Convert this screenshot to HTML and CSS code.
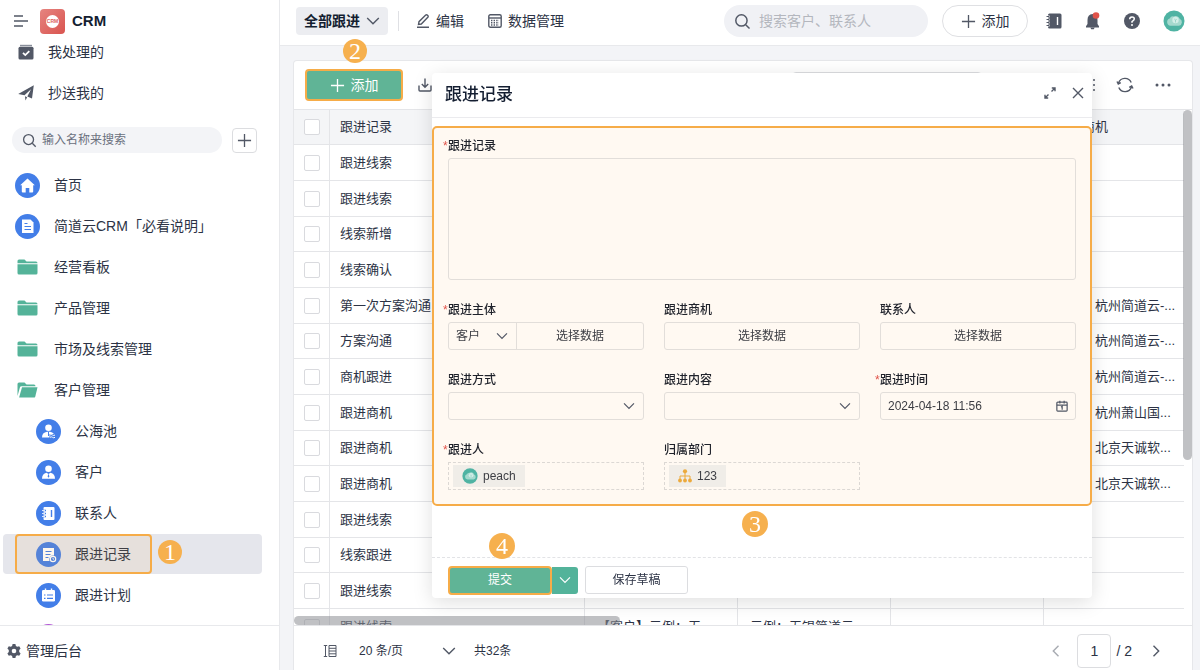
FILE: index.html
```html
<!DOCTYPE html>
<html lang="zh-CN">
<head>
  <meta charset="UTF-8">
  <meta name="viewport" content="width=device-width, initial-scale=1.0">
  <title>CRM - 跟进记录</title>
  <link rel="stylesheet" href="styles.css">
</head>
<body>

  <!-- Shared icons -->
  <svg class="sprite" aria-hidden="true">
    <symbol id="i-search" viewBox="0 0 16 16"><circle cx="7" cy="7" r="5.3"/><path d="M11 11l3.6 3.6"/></symbol>
    <symbol id="i-plus" viewBox="0 0 16 16"><path d="M8 1v14M1 8h14"/></symbol>
    <symbol id="i-down" viewBox="0 0 14 14"><path d="M1.2 4L7 9.800l5.800-5.800"/></symbol>
    <symbol id="i-left" viewBox="0 0 14 14"><path d="M9.5 1.8L4.3 7l5.2 5.2"/></symbol>
    <symbol id="i-right" viewBox="0 0 14 14"><path d="M4.5 1.8L9.7 7l-5.2 5.2"/></symbol>
    <symbol id="i-folder" viewBox="0 0 20 16"><path d="M0 4.2V2Q0 .5 1.5.5H7l2 2h9.5Q20 2.500 20 4.200z"/><path d="M0 5.200h20V14q0 1.600-1.500 1.600h-17Q0 15.600 0 14z"/></symbol>
    <symbol id="i-folder-open" viewBox="0 0 20 16"><path d="M0 14V2Q0 .5 1.500.5H7l2 2h7.500Q18 2.500 18 4.200H4Q2.800 4.200 2.400 5.400z"/><path d="M4.500 5.200H20l-2.200 9.200q-.4 1.200-1.500 1.200H1.600z"/></symbol>
    <symbol id="i-cloud" viewBox="0 0 22 22">
      <circle cx="11" cy="11" r="10.500" fill="#4fb3a3"/>
      <path d="M7.500 15.800a3.700 3.700 0 0 1-.8-7.200 3.600 3.600 0 0 1 3.700-2.200 4.600 4.600 0 0 1 6.300 2.400 3.700 3.700 0 0 1-.7 7z" fill="#a5d9ce"/>
      <circle cx="12.500" cy="10" r="3.200" fill="#d3eee8"/>
      <path d="M11.300 9l1.200 1.200L13.700 9M12.500 10v2.500" fill="none" stroke="#8fcfc2" stroke-width=".8"/>
    </symbol>
    <symbol id="i-cal" viewBox="0 0 14 14"><rect x="1" y="2.500" width="12" height="10.500" rx="1"/><path d="M1 6h12M4.500 1v3M9.500 1v3M5.800 8.200l1.400-.6V11.500"/></symbol>
  </svg>

  <aside class="sidebar">
    <div class="brand">
      <svg class="line" width="16" height="16" viewBox="0 0 16 16"><path d="M1 3h9M1 8h14M1 13h9"/></svg>
      <span class="logo"><i>CRM</i></span>
      <strong>CRM</strong>
    </div>

    <ul class="todo">
      <li><a href="#">
        <svg width="16" height="16" viewBox="0 0 16 16"><path d="M2 .8h12v1.400H2z" fill="#8a8f9b"/><rect x=".5" y="2.800" width="15" height="12.700" rx="1.500" fill="#525866"/><path d="M5 8.800l2.300 2.300 4-4" fill="none" stroke="#fff" stroke-width="1.800"/></svg>
        我处理的</a></li>
      <li><a href="#">
        <svg width="16" height="16" viewBox="0 0 16 16" fill="#525866"><path d="M15.800.3L14 13.600l-4.700-2L13 4.300l-6.500 6L.2 8.900z"/><path d="M7 11.300l2.200 1-1.800 3.300z"/></svg>
        抄送我的</a></li>
    </ul>

    <div class="find">
      <div class="find-box">
        <svg class="line" width="15" height="15"><use href="#i-search"/></svg>
        <input type="text" placeholder="输入名称来搜索" aria-label="输入名称来搜索">
      </div>
      <button class="find-add" aria-label="新建"><svg class="line" width="15" height="15"><use href="#i-plus"/></svg></button>
    </div>

    <nav class="menu">
      <a href="#"><svg width="25" height="25" viewBox="0 0 25 25"><circle cx="12.500" cy="12.500" r="12.500" fill="#437ee8"/><path d="M12.500 5.500l7.300 6.700h-1.600v6.300q0 1-1 1h-2.900v-4.500h-3.600v4.500H7.800q-1 0-1-1v-6.300H5.200z" fill="#fff"/></svg>首页</a>
      <a href="#"><svg width="25" height="25" viewBox="0 0 25 25"><circle cx="12.500" cy="12.500" r="12.500" fill="#437ee8"/><path d="M7 5.500h8.500l3 3v10.500H7z" fill="#fff"/><path d="M9.500 9.500h3M9.500 12.500h6.500M9.500 15.500h6.500" stroke="#437ee8"/></svg>简道云CRM「必看说明」</a>
      <a href="#"><svg class="folder" width="25" height="16"><use href="#i-folder"/></svg>经营看板</a>
      <a href="#"><svg class="folder" width="25" height="16"><use href="#i-folder"/></svg>产品管理</a>
      <a href="#"><svg class="folder" width="25" height="16"><use href="#i-folder"/></svg>市场及线索管理</a>
      <a href="#"><svg class="folder" width="25" height="16"><use href="#i-folder-open"/></svg>客户管理</a>
      <a href="#" class="sub"><svg width="25" height="25" viewBox="0 0 25 25"><circle cx="12.500" cy="12.500" r="12.500" fill="#437ee8"/><circle cx="12.500" cy="8.800" r="3.300" fill="#fff"/><path d="M6 18.500q0-5 5-5.800h3q2.500.4 4 2.300h-4.500v3.500z" fill="#fff"/><path d="M12.500 13v4" stroke="#437ee8"/><path d="M14 16q1.200-1 2.500 0t2.500 0M14 18.300q1.200-1 2.500 0t2.500 0" fill="none" stroke="#fff"/></svg>公海池</a>
      <a href="#" class="sub"><svg width="25" height="25" viewBox="0 0 25 25"><circle cx="12.500" cy="12.500" r="12.500" fill="#437ee8"/><circle cx="12.500" cy="8.800" r="3.300" fill="#fff"/><path d="M6 18.700q0-5.200 4.500-6l2 1.300 2-1.300q4.500.8 4.500 6z" fill="#fff"/><path d="M12.500 13.500l.9 3-.9 1.200-.9-1.200z" fill="#437ee8"/></svg>客户</a>
      <a href="#" class="sub"><svg width="25" height="25" viewBox="0 0 25 25"><circle cx="12.500" cy="12.500" r="12.500" fill="#437ee8"/><rect x="7.500" y="6" width="11" height="13" rx="1" fill="#fff"/><path d="M15.500 9v7" stroke="#437ee8" stroke-width="1.400"/><path d="M6 9.500h4M6 12.500h4M6 15.500h4" stroke="#437ee8" stroke-width="1.600"/><path d="M6 9.500h3M6 12.500h3M6 15.500h3" stroke="#fff" stroke-width=".8"/></svg>联系人</a>
      <a href="#" class="sub active"><svg width="25" height="25" viewBox="0 0 25 25"><circle cx="12.500" cy="12.500" r="12.500" fill="#437ee8"/><path d="M7 6h11v7.500a4 4 0 0 0-4.500 5.500H7z" fill="#fff"/><path d="M9.500 9.500h6M9.500 12.500h5M9.500 15.500h3" stroke="#437ee8"/><circle cx="17" cy="17" r="2.700" fill="none" stroke="#fff" stroke-width="1.200"/><path d="M17 15.800v1.400h1" fill="none" stroke="#fff" stroke-width=".8"/></svg>跟进记录
        <span class="mark"></span><span class="step step-1">1</span></a>
      <a href="#" class="sub"><svg width="25" height="25" viewBox="0 0 25 25"><circle cx="12.500" cy="12.500" r="12.500" fill="#437ee8"/><rect x="6" y="7" width="13" height="11.500" rx="1.200" fill="#fff"/><path d="M9.500 5.500v3M15.500 5.500v3" stroke="#fff" stroke-width="1.400"/><path d="M8 12h1.500M11 12h6M8 15.300h1.500M11 15.300h6" stroke="#437ee8" stroke-width="1.200"/></svg>跟进计划</a>
      <a href="#" class="sub" aria-label="更多"><svg width="25" height="25" viewBox="0 0 25 25"><circle cx="12.500" cy="12.500" r="12.500" fill="#b357d6"/></svg></a>
    </nav>

    <a href="#" class="admin">
      <svg width="14" height="14" viewBox="0 0 14 14"><path d="M5.600 0h2.800l.5 2 1.300.8 2-.6 1.400 2.400L12.200 6v2l1.400 1.400-1.400 2.400-2-.6-1.300.8-.5 2H5.600l-.5-2-1.300-.8-2 .6L.4 9.400 1.800 8V6L.4 4.600l1.400-2.400 2 .6L5.100 2z" fill="#525866"/><circle cx="7" cy="7" r="2.300" fill="#fff"/></svg>
      管理后台
    </a>
  </aside>

  <main class="main">
    <header class="topbar">
      <button class="view">全部跟进 <svg class="line" width="14" height="14"><use href="#i-down"/></svg></button>
      <span class="divider"></span>
      <button class="link"><svg class="line" width="14" height="14" viewBox="0 0 14 14"><path d="M1 13.200h12M2.500 10.500l.5-2.800L9.700 1q.8-.6 1.600.1l.6.6q.6.800-.1 1.600L5.300 10z"/></svg>编辑</button>
      <button class="link"><svg class="line" width="14" height="14" viewBox="0 0 14 14"><rect x=".8" y=".8" width="12.400" height="12.400" rx="1.500"/><path d="M1 4h12"/><path d="M3 6.500h8M3 8.800h8M3 11h8" stroke-dasharray="1.400 1.200"/></svg>数据管理</button>
      <div class="search">
        <svg class="line" width="17" height="17"><use href="#i-search"/></svg>
        <input type="text" placeholder="搜索客户、联系人" aria-label="搜索客户、联系人">
      </div>
      <button class="add"><svg class="line" width="15" height="15"><use href="#i-plus"/></svg>添加</button>
      <div class="tools">
        <svg width="16" height="16" viewBox="0 0 16 16"><rect x="2" y=".5" width="13.500" height="15" rx="1.500" fill="#525866"/><path d="M11.500 4v8" stroke="#fff" stroke-width="1.400"/><path d="M.5 3.500h3M.5 6.500h3M.5 9.500h3M.5 12.500h3" stroke="#fff" stroke-width="1.800"/><path d="M.5 3.500h2.500M.5 6.500h2.500M.5 9.500h2.500M.5 12.500h2.500" stroke="#525866"/></svg>
        <svg width="16" height="18" viewBox="0 0 16 18"><path d="M7.500 2q5 .5 5 6v4l1.500 2.200v1.300H1v-1.300L2.500 12V8Q2.500 2.500 7.500 2z" fill="#525866"/><path d="M5.300 15.500h4.400l-.9 1.700H6.200z" fill="#525866"/><circle cx="11" cy="3.500" r="3.300" fill="#e0534a"/></svg>
        <svg width="16" height="16" viewBox="0 0 16 16"><circle cx="8" cy="8" r="8" fill="#525866"/><path d="M5.700 6.300Q5.700 4 8 4t2.300 2.100Q10.300 7.300 8 8.600v1.200" fill="none" stroke="#fff" stroke-width="1.500"/><circle cx="8" cy="11.900" r="1" fill="#fff"/></svg>
        <svg width="22" height="22"><use href="#i-cloud"/></svg>
      </div>
    </header>

    <section class="card">
      <div class="toolbar">
        <button class="create"><svg class="line" width="15" height="15"><use href="#i-plus"/></svg>添加</button>
        <span class="step step-2">2</span>
        <svg class="line" width="14" height="14" viewBox="0 0 14 14"><path d="M7 .5v8.500M3.800 6L7 9.200 10.200 6M1 7.500V12q0 1 1 1h10q1 0 1-1V7.500"/></svg>
        <input class="filter" type="text" aria-label="搜索数据">
        <div class="tools">
          <svg class="line" width="16" height="14" viewBox="0 0 16 14"><path d="M0 2h16M0 7h16M0 12h16" stroke-dasharray="12 2 2"/></svg>
          <svg class="line" width="18" height="18" viewBox="0 0 18 18"><path d="M2.500 7A6.800 6.800 0 0 1 15.200 6.500M15.500 11A6.800 6.800 0 0 1 2.800 11.500M1 5.500L2.300 8l2.500-1.300M17 12.500L15.700 10l-2.500 1.300"/></svg>
          <svg width="16" height="16" viewBox="0 0 16 16" fill="#525866"><circle cx="2" cy="8" r="1.500"/><circle cx="8" cy="8" r="1.500"/><circle cx="14" cy="8" r="1.500"/></svg>
        </div>
      </div>

      <div class="grid">
        <table>
          <colgroup><col class="c-check"><col class="c-name"><col class="c-data"><col class="c-data"><col class="c-data"><col></colgroup>
          <thead>
            <tr><th><input type="checkbox" aria-label="全选"></th><th>跟进记录</th><th>跟进主体</th><th>客户</th><th>联系人</th><th>跟进商机</th></tr>
          </thead>
          <tbody id="rows"></tbody>
        </table>
        <span class="thumb thumb-y"></span>
        <span class="thumb thumb-x"></span>
      </div>

      <footer class="pager">
        <svg class="line rows-icon" width="14" height="14" viewBox="0 0 14 14"><path d="M2.500 1.500v11M.8 1.500h3.400M.8 12.500h3.400M6 1.500h7v11H6zM6 4.300h7M6 7h7M6 9.800h7"/></svg>
        <button class="size">20 条/页 <svg class="line" width="14" height="14"><use href="#i-down"/></svg></button>
        <span>共32条</span>
        <div class="pages">
          <button class="prev" aria-label="上一页"><svg class="line" width="14" height="14"><use href="#i-left"/></svg></button>
          <input type="text" value="1" aria-label="页码">
          <span>/ 2</span>
          <button class="next" aria-label="下一页"><svg class="line" width="14" height="14"><use href="#i-right"/></svg></button>
        </div>
      </footer>
    </section>
  </main>

  <div class="dialog" role="dialog" aria-labelledby="dialogTitle">
    <header class="dialog-head">
      <h2 id="dialogTitle">跟进记录</h2>
      <button aria-label="全屏"><svg class="line" width="12" height="12" viewBox="0 0 12 12"><path d="M7.500 4.500L11 1M7.800 1H11v3.200M4.500 7.500L1 11M4.200 11H1V7.800"/></svg></button>
      <button aria-label="关闭"><svg class="line" width="12" height="12" viewBox="0 0 12 12"><path d="M1 1l10 10M11 1L1 11"/></svg></button>
    </header>

    <form class="fields">
      <div class="field wide">
        <label class="required" for="record">跟进记录</label>
        <textarea id="record"></textarea>
      </div>
      <div class="field">
        <label class="required" for="subject">跟进主体</label>
        <div class="split">
          <div class="select">
            <select id="subject"><option>客户</option><option>线索</option></select>
            <svg class="line" width="12" height="12"><use href="#i-down"/></svg>
          </div>
          <button type="button">选择数据</button>
        </div>
      </div>
      <div class="field">
        <label for="deal">跟进商机</label>
        <button type="button" class="box" id="deal">选择数据</button>
      </div>
      <div class="field">
        <label for="contact">联系人</label>
        <button type="button" class="box" id="contact">选择数据</button>
      </div>
      <div class="field">
        <label for="way">跟进方式</label>
        <div class="select box">
          <select id="way"><option></option></select>
          <svg class="line" width="12" height="12"><use href="#i-down"/></svg>
        </div>
      </div>
      <div class="field">
        <label for="content">跟进内容</label>
        <div class="select box">
          <select id="content"><option></option></select>
          <svg class="line" width="12" height="12"><use href="#i-down"/></svg>
        </div>
      </div>
      <div class="field">
        <label class="required" for="time">跟进时间</label>
        <div class="date box">
          <input id="time" type="text" value="2024-04-18 11:56">
          <svg class="line" width="12" height="12"><use href="#i-cal"/></svg>
        </div>
      </div>
      <div class="field">
        <span class="required label">跟进人</span>
        <div class="picked"><span class="tag"><svg width="16" height="16" viewBox="0 0 22 22"><use href="#i-cloud"/></svg>peach</span></div>
      </div>
      <div class="field">
        <span class="label">归属部门</span>
        <div class="picked"><span class="tag"><svg width="14" height="14" viewBox="0 0 14 14" fill="#ecaa3d"><circle cx="7" cy="2.300" r="2.100"/><circle cx="2" cy="11.500" r="1.900"/><circle cx="7" cy="11.500" r="1.900"/><circle cx="12" cy="11.500" r="1.900"/><path d="M7 3v8M2 11V7h10v4" fill="none" stroke="#ecaa3d"/></svg>123</span></div>
      </div>
    </form>
    <span class="step step-3">3</span>

    <footer class="dialog-foot">
      <button class="submit">提交</button>
      <button class="more" aria-label="更多"><svg class="line" width="12" height="12"><use href="#i-down"/></svg></button>
      <button class="draft">保存草稿</button>
      <span class="step step-4">4</span>
    </footer>
  </div>

  <script>
    // name, linked subject, customer, contact, deal
    const records = [
      ["跟进线索", "", "", "", ""],
      ["跟进线索", "", "", "", ""],
      ["线索新增", "", "", "", ""],
      ["线索确认", "", "", "", ""],
      ["第一次方案沟通", "", "", "", "示例：杭州简道云-..."],
      ["方案沟通", "", "", "", "示例：杭州简道云-..."],
      ["商机跟进", "", "", "", "示例：杭州简道云-..."],
      ["跟进商机", "", "", "", "示例：杭州萧山国..."],
      ["跟进商机", "", "", "", "示例：北京天诚软..."],
      ["跟进商机", "", "", "", "示例：北京天诚软..."],
      ["跟进线索", "", "", "", ""],
      ["线索跟进", "", "", "", ""],
      ["跟进线索", "", "", "", ""],
      ["跟进线索", "【客户】示例：无...", "示例：无锡简道云", "", ""]
    ];

    const body = document.getElementById("rows");
    records.forEach((record) => {
      const row = body.insertRow();
      const check = document.createElement("input");
      check.type = "checkbox";
      check.setAttribute("aria-label", "选择");
      row.insertCell().appendChild(check);
      record.forEach((text) => {
        row.insertCell().textContent = text;
      });
    });
  </script>

</body>
</html>
```
FILE: styles.css
```css
* {
  box-sizing: border-box;
}

body {
  margin: 0;
  height: 100vh;
  display: grid;
  grid-template-columns: 280px 1fr;
  overflow: hidden;
  font-family: "Liberation Sans", "Noto Sans CJK SC", sans-serif;
  font-size: 14px;
  line-height: 20px;
  color: #2c3345;
  background: #f3f4f7;
}

button, input, select, textarea {
  font: inherit;
  color: inherit;
  margin: 0;
  padding: 0;
  border: none;
  background: none;
  outline: none;
  min-width: 0;
}

button {
  display: flex;
  align-items: center;
  justify-content: center;
}

a {
  color: inherit;
  text-decoration: none;
}

svg {
  flex: none;
  display: block;
}

.sprite {
  position: absolute;
  width: 0;
  height: 0;
}

.line {
  fill: none;
  stroke: #525866;
  stroke-width: 1.4;
}

/* numbered steps */
.step {
  position: absolute;
  width: 24px;
  height: 24px;
  border-radius: 50%;
  background: #f6b04e;
  color: #fff;
  font-family: "Liberation Serif", serif;
  font-size: 24px;
  line-height: 24px;
  text-align: center;
}

/* sidebar */
.sidebar {
  display: flex;
  flex-direction: column;
  min-height: 0;
  background: #fff;
  border-right: 1px solid #e8e9ec;
}

.brand {
  flex: none;
  height: 40px;
  padding: 2px 13px 0;
  display: flex;
  align-items: center;
  font-size: 15px;
  color: #141e31;
}

.brand .line {
  stroke-width: 1.6;
}

.logo {
  width: 25px;
  height: 25px;
  margin: 0 7px 0 11px;
  border-radius: 4px;
  background: linear-gradient(135deg, #e68480, #d9544f);
  display: grid;
  place-items: center;
}

.logo i {
  width: 13px;
  height: 13px;
  border-radius: 50%;
  background: #fff;
  color: #dd625d;
  font: bold 5px/13px "Liberation Sans", sans-serif;
  text-align: center;
}

.todo {
  flex: none;
  list-style: none;
  margin: 0;
  padding: 0 18px;
  display: grid;
  gap: 17px;
}

.todo a {
  height: 24px;
  display: flex;
  align-items: center;
  gap: 14px;
}

.find {
  flex: none;
  display: flex;
  align-items: center;
  gap: 10px;
  margin: 22px 22px 12px 12px;
}

.find-box {
  flex: 1;
  height: 26px;
  padding: 0 10px;
  border-radius: 13px;
  background: #f3f4f7;
  display: flex;
  align-items: center;
  gap: 5px;
}

.find-box input {
  flex: 1;
  font-size: 12px;
}

.find-box input::placeholder {
  color: #6a707d;
}

.find-add {
  width: 25px;
  height: 25px;
  border: 1px solid #dcdde0;
  border-radius: 4px;
}

.menu {
  flex: 1;
  min-height: 0;
  overflow: hidden;
  display: flex;
  flex-direction: column;
  gap: 1px;
  padding: 0 17px 0 3px;
}

.menu a {
  position: relative;
  flex: none;
  height: 40px;
  padding-left: 12px;
  border-radius: 4px;
  display: flex;
  align-items: center;
  gap: 14px;
}

.menu .sub {
  padding-left: 33px;
}

.menu .active {
  background: #e5e6ec;
}

.folder {
  fill: #54b399;
}

.mark {
  position: absolute;
  top: 0;
  bottom: 0;
  left: 12px;
  width: 137px;
  border: 2px solid #f6ac48;
  border-radius: 4px;
  background: rgba(246, 176, 78, 0.1);
}

.step-1 {
  left: 155px;
  top: 6px;
}

.admin {
  flex: none;
  height: 45px;
  padding: 5px 7px 0;
  border-top: 1px solid #e8e9ec;
  display: flex;
  align-items: center;
  gap: 5px;
}

/* top bar */
.main {
  display: flex;
  flex-direction: column;
  min-width: 0;
  min-height: 0;
}

.topbar {
  flex: none;
  height: 46px;
  padding: 0 15px 3px 16px;
  border-bottom: 1px solid #e8e9ec;
  background: #fff;
  display: flex;
  align-items: center;
}

.view {
  height: 28px;
  padding: 0 8px;
  gap: 6px;
  border-radius: 4px;
  background: #ecedf1;
  font-weight: bold;
  color: #141e31;
}

.divider {
  width: 1px;
  height: 20px;
  margin: 0 17px 0 10px;
  background: #dfe0e4;
}

.link {
  gap: 6px;
  margin-right: 24px;
}

.search {
  width: 204px;
  height: 32px;
  margin-left: auto;
  padding: 0 10px;
  border-radius: 16px;
  background: #f0f1f5;
  display: flex;
  align-items: center;
  gap: 8px;
}

.search input {
  flex: 1;
}

.search input::placeholder {
  color: #b4b7be;
}

.add {
  width: 86px;
  height: 32px;
  margin: 0 18px 0 14px;
  gap: 6px;
  border: 1px solid #dfe0e3;
  border-radius: 16px;
}

.tools {
  display: flex;
  align-items: center;
  gap: 23px;
}

/* data card */
.card {
  flex: 1;
  min-height: 0;
  margin: 14px 7px 0 13px;
  border: 1px solid #e6e7ea;
  border-bottom: none;
  border-radius: 4px 4px 0 0;
  background: #fff;
  display: flex;
  flex-direction: column;
}

.toolbar {
  position: relative;
  flex: none;
  height: 49px;
  padding: 0 21px 0 11px;
  border-bottom: 1px solid #e4e5e8;
  display: flex;
  align-items: center;
  gap: 15px;
}

.toolbar .tools {
  gap: 21px;
}

.create {
  width: 98px;
  height: 32px;
  gap: 6px;
  border: 2px solid #f6ac48;
  border-radius: 4px;
  background: #60b496;
  color: #fff;
}

.create .line,
.more .line {
  stroke: #fff;
}

.step-2 {
  left: 49px;
  top: -22px;
}

.filter {
  width: 190px;
  height: 26px;
  margin: 0 82px 0 auto;
  border: 1px solid #dcdde0;
  border-radius: 4px;
}

.grid {
  position: relative;
  flex: 1;
  min-height: 0;
  overflow: hidden;
  padding-right: 8px;
}

table {
  width: 100%;
  table-layout: fixed;
  border-collapse: separate;
  border-spacing: 0;
  font-size: 13px;
}

.c-check {
  width: 36px;
}

.c-name {
  width: 255px;
}

.c-data {
  width: 153px;
}

th, td {
  height: 36px;
  padding: 0 0 0 12px;
  border-right: 1px solid #e4e5e8;
  border-bottom: 1px solid #e4e5e8;
  text-align: left;
  font-weight: normal;
  white-space: nowrap;
  overflow: hidden;
}

th {
  height: 35px;
  background: #f4f5f7;
}

tr:nth-child(3n) td {
  height: 35px;
}

th:last-child, td:last-child {
  border-right: none;
}

th:nth-child(-n+2), td:nth-child(-n+2) {
  padding-left: 10px;
}

[type="checkbox"] {
  appearance: none;
  display: block;
  width: 16px;
  height: 16px;
  border: 1px solid #d9dade;
  border-radius: 2px;
  background: #fff;
}

.thumb {
  position: absolute;
  border-radius: 5px;
  background: rgba(140, 142, 148, 0.55);
}

.thumb-y {
  top: 0;
  right: 0;
  width: 9px;
  height: 68%;
}

.thumb-x {
  left: 0;
  bottom: 0;
  width: 326px;
  height: 9px;
}

.pager {
  flex: none;
  height: 45px;
  padding: 5px 29px 0;
  border-top: 1px solid #e4e5e8;
  display: flex;
  align-items: center;
  font-size: 12px;
}

.rows-icon {
  margin-right: 22px;
  stroke-width: 1;
}

.size {
  width: 97px;
  margin-right: 18px;
  justify-content: space-between;
}

.pages {
  margin-left: auto;
  display: flex;
  align-items: center;
  font-size: 14px;
}

.pages input {
  width: 34px;
  height: 34px;
  margin: 0 5px 0 14px;
  border: 1px solid #dcdde0;
  border-radius: 4px;
  text-align: center;
}

.prev {
  opacity: 0.5;
}

.next {
  margin-left: 17px;
}

/* record dialog */
.dialog {
  position: fixed;
  top: 73px;
  left: 432px;
  right: 108px;
  border-radius: 4px;
  background: #fff;
  box-shadow: 0 4px 20px rgba(0, 0, 0, 0.13);
  font-size: 12px;
}

.dialog-head {
  height: 45px;
  padding: 0 8px 4px 13px;
  border-bottom: 1px solid #ebebee;
  display: flex;
  align-items: center;
  gap: 16px;
}

.dialog-head h2 {
  flex: 1;
  margin: 0;
  padding-top: 4px;
  font-size: 17px;
  font-weight: 500;
  color: #141e31;
}

.fields {
  margin-top: 8px;
  padding: 7px 14px 14px;
  border: 2px solid #f6ac48;
  border-radius: 5px;
  background: #fff9f2;
  display: grid;
  grid-template-columns: repeat(3, 1fr);
  gap: 19px 20px;
  color: #3d3e44;
}

.wide {
  grid-column: 1 / -1;
}

label, .label {
  position: relative;
  display: block;
  height: 23px;
  line-height: 22px;
  font-weight: 500;
  color: #1f222b;
}

.required::before {
  content: "*";
  position: absolute;
  left: -5px;
  color: #e0534a;
}

textarea {
  display: block;
  width: 100%;
  height: 122px;
  border: 1px solid #e2deda;
  border-radius: 3px;
  resize: none;
}

.box, .split {
  width: 100%;
  height: 28px;
  border: 1px solid #e2deda;
  border-radius: 3px;
}

.split {
  display: flex;
}

.split .select {
  width: 68px;
  border-right: 1px solid #e2deda;
}

.split button {
  flex: 1;
}

.select {
  position: relative;
}

.select select {
  appearance: none;
  width: 100%;
  height: 100%;
  padding-left: 7px;
}

.select svg {
  position: absolute;
  right: 8px;
  top: 7px;
  pointer-events: none;
}

.date {
  display: flex;
  align-items: center;
  padding: 0 7px;
}

.date input {
  flex: 1;
}

.picked {
  height: 28px;
  padding: 2px 4px;
  border: 1px dashed #dcd8d4;
  display: flex;
}

.tag {
  padding: 0 9px;
  background: #f0ede8;
  display: flex;
  align-items: center;
  gap: 5px;
}

.step-3, .step-4 {
  width: 26px;
  height: 26px;
  line-height: 26px;
}

.step-3 {
  left: 310px;
  bottom: 61px;
}

.dialog-foot {
  position: relative;
  height: 41px;
  margin-top: 51px;
  padding: 4px 16px 0;
  border-top: 1px dashed #e2e3e6;
  display: flex;
  align-items: center;
}

.submit {
  width: 104px;
  height: 29px;
  border: 2px solid #f6ac48;
  border-radius: 4px;
  background: #60b496;
  color: #fff;
}

.more {
  width: 26px;
  height: 27px;
  border-radius: 0 3px 3px 0;
  background: #53b39a;
}

.draft {
  width: 103px;
  height: 28px;
  margin-left: 7px;
  border: 1px solid #dcdde0;
  border-radius: 3px;
}

.step-4 {
  left: 57px;
  top: -25px;
}
```
